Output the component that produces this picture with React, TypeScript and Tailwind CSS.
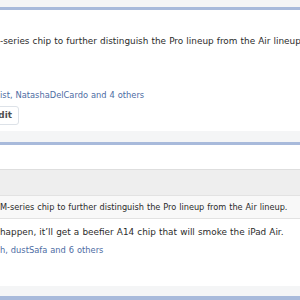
import React from "react";

export default function App() {
  const font = { fontFamily: '"DejaVu Sans", Verdana, sans-serif' };
  return (
    <div
      className="w-[300px] h-[300px] overflow-hidden bg-white flex flex-col text-[#2b2b2b] [word-spacing:0.3px]"
      style={font}
    >
      <div className="h-[7px] shrink-0 bg-[#f4f5f6]" />
      <div className="h-[3px] shrink-0 bg-[#a8badb]" />
      {/* post 1 */}
      <div className="h-[121px] shrink-0 bg-white flex flex-col">
        <div className="h-[25px] shrink-0" />
        <div className="h-[12px] leading-[12px] text-[8.9px] whitespace-nowrap">
          -series chip to further distinguish the Pro lineup from the Air lineup.
        </div>
        <div className="h-[42px] shrink-0" />
        <div className="h-[12px] leading-[12px] text-[8.3px] whitespace-nowrap text-[#4d6ca3]">
          ist, NatashaDelCardo and 4 others
        </div>
        <div className="h-[5px] shrink-0" />
        <div className="flex">
          <div className="ml-[-20px] w-[39px] h-[19px] border border-[#dde2e8] rounded-[3px] bg-white flex items-center justify-end pr-[6px]">
            <span className="text-[8.9px] font-bold text-[#505050] leading-none">Edit</span>
          </div>
        </div>
      </div>
      <div className="h-[11px] shrink-0 bg-[#f4f5f6]" />
      <div className="h-[3px] shrink-0 bg-[#a8badb]" />
      {/* post 2 */}
      <div className="h-[141px] shrink-0 bg-white flex flex-col">
        <div className="h-[24px] shrink-0" />
        <div className="h-[26px] shrink-0 bg-[#eeeeee] border-t border-[#dedede]" />
        <div className="h-[24px] shrink-0 bg-[#f8f8f8] border-t border-b border-[#e2e2e2] flex items-center">
          <span className="text-[8.2px] leading-[12px] whitespace-nowrap">
            M-series chip to further distinguish the Pro lineup from the Air lineup.
          </span>
        </div>
        <div className="h-[7px] shrink-0" />
        <div className="h-[12px] leading-[12px] text-[8.9px] whitespace-nowrap">
          happen, it’ll get a beefier A14 chip that will smoke the iPad Air.
        </div>
        <div className="h-[6px] shrink-0" />
        <div className="h-[12px] leading-[12px] text-[8.3px] whitespace-nowrap text-[#4d6ca3]">
          h, dustSafa and 6 others
        </div>
      </div>
      <div className="h-[10px] shrink-0 bg-[#f4f5f6]" />
      <div className="h-[4px] shrink-0 bg-[#a8badb]" />
    </div>
  );
}
